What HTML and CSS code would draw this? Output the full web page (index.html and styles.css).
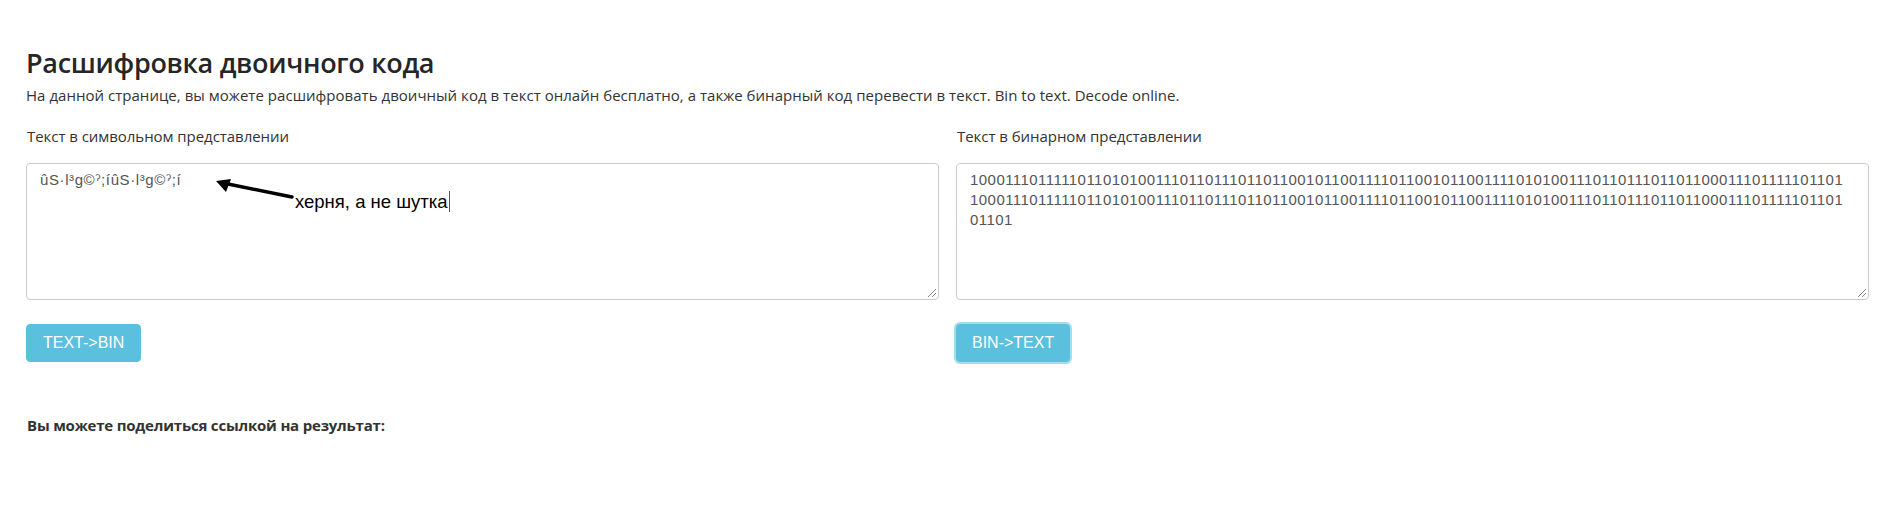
FILE: index.html
```html
<!DOCTYPE html>
<html lang="ru">
<head>
<meta charset="utf-8">
<title>Расшифровка двоичного кода</title>
<link rel="stylesheet" href="styles.css">
</head>
<body>
<div class="page">
  <h1 class="title">Расшифровка двоичного кода</h1>
  <p class="lead">На данной странице, вы можете расшифровать двоичный код в текст онлайн бесплатно, а также бинарный код перевести в текст. Bin to text. Decode online.</p>
  <div class="grid">
    <div class="col">
      <label class="label">Текст в символьном представлении</label>
      <div class="field">
        <div class="area area-text">ûS·l³g©ˀ;íûS·l³g©ˀ;í</div>
        <div class="note">
          <svg class="arrow" width="80" height="24" viewBox="0 0 80 24"><path d="M78 18 L14 5" stroke="#000" stroke-width="3.4" fill="none" stroke-linecap="round"/><path d="M2 2 L17 0 L12 13 Z" fill="#000"/></svg>
          <span class="note-text">херня, а не шутка<span class="caret"></span></span>
        </div>
      </div>
      <button class="btn">TEXT-&gt;BIN</button>
    </div>
    <div class="col">
      <label class="label">Текст в бинарном представлении</label>
      <div class="field">
        <div class="area area-bin">10001110111110110101001110110111011011001011001111011001011001111010100111011011101101100011101111101101<br>10001110111110110101001110110111011011001011001111011001011001111010100111011011101101100011101111101101<br>01101</div>
      </div>
      <button class="btn btn-focus">BIN-&gt;TEXT</button>
    </div>
  </div>
  <p class="share">Вы можете поделиться ссылкой на результат:</p>
</div>
</body>
</html>
```
FILE: styles.css
```css
html, body { margin: 0; padding: 0; background: #fff; }
body { font-family: "Open Sans", "Noto Sans", sans-serif; color: #333; }
.page { padding: 46px 29px 0 26px; }
.title { font-size: 27px; font-weight: 600; line-height: 33px; margin: 0; color: #262626; letter-spacing: -0.3px; }
.lead { font-size: 15px; line-height: 20px; margin: 6px 0 0 0; letter-spacing: 0.03px; }
.grid { display: grid; grid-template-columns: 913px 913px; column-gap: 17px; margin-top: 21px; }
.col { display: flex; flex-direction: column; align-items: flex-start; }
.label { font-size: 15px; line-height: 20px; letter-spacing: -0.05px; margin-left: 1px; }
.field { position: relative; width: 913px; margin-top: 17px; }
.area { box-sizing: border-box; width: 913px; height: 137px; border: 1px solid #ccc; border-radius: 4px; padding: 6px 13px; font-family: "Liberation Sans", Arial, sans-serif; font-size: 15px; line-height: 20px; color: #555; position: relative; letter-spacing: 0.1px; }
.area::after { content: ""; position: absolute; right: 2px; bottom: 2px; width: 8px; height: 8px; background: linear-gradient(135deg, transparent 45%, #888 45%, #888 52%, transparent 52%, transparent 70%, #888 70%, #888 77%, transparent 77%); }
.area-bin { letter-spacing: 0.45px; }
.area-text { padding-left: 13px; letter-spacing: 0.6px; }
.note { position: absolute; left: 188px; top: 16px; }
.arrow { position: absolute; left: 0; top: 0; }
.note-text { position: absolute; left: 81px; top: 12px; font-family: "Liberation Sans", Arial, sans-serif; font-size: 18.5px; line-height: 22px; color: #000; white-space: nowrap; }
.caret { display: inline-block; vertical-align: top; width: 1px; height: 21px; background: #555; margin-left: 1px; }
.btn { margin-top: 24px; height: 38px; padding: 0 16px; background: #5bc0de; color: #fff; border: 1px solid #5bc0de; border-radius: 4px; font-family: "Liberation Sans", Arial, sans-serif; font-size: 16px; cursor: pointer; }
.btn-focus { box-shadow: 0 0 0 2px #a7dcec; padding: 0 15px; }
.share { font-size: 15px; font-weight: 700; margin: 53px 0 0 1px; line-height: 20px; letter-spacing: -0.2px; }
```
